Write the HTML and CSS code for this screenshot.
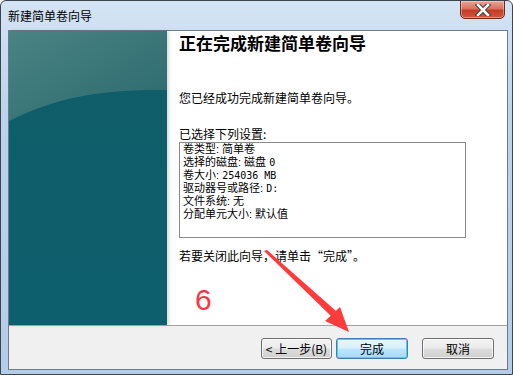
FILE: index.html
```html
<!DOCTYPE html>
<html lang="zh-CN">
<head>
  <meta charset="UTF-8">
  <title>新建简单卷向导</title>
  <link rel="stylesheet" href="styles.css">
</head>
<body>
  <div class="window">
    <div class="titlebar">
      <span class="title">新建简单卷向导</span>
      <button class="close" aria-label="关闭">
        <svg width="16" height="12" viewBox="0 0 16 12">
          <path d="M3 1 L13 11 M13 1 L3 11" stroke="#3a3f4a" stroke-width="4.5" stroke-linecap="square"/>
          <path d="M3 1 L13 11 M13 1 L3 11" stroke="#ffffff" stroke-width="2.5" stroke-linecap="square"/>
        </svg>
      </button>
    </div>

    <div class="client">
      <div class="main">
        <div class="side">
          <svg width="158" height="294" viewBox="0 0 158 294">
            <defs>
              <linearGradient id="topGrad" x1="0" y1="0" x2="1" y2="1">
                <stop offset="0" stop-color="#4a8383"/>
                <stop offset="1" stop-color="#2b696e"/>
              </linearGradient>
              <linearGradient id="lowGrad" x1="0" y1="0" x2="0" y2="1">
                <stop offset="0" stop-color="#0f5d68"/>
                <stop offset="1" stop-color="#0e5f6e"/>
              </linearGradient>
            </defs>
            <rect width="158" height="294" fill="url(#lowGrad)"/>
            <path d="M0 0 H158 V59 C110 59 60 60 0 90 Z" fill="url(#topGrad)"/>
          </svg>
        </div>

        <div class="content">
          <h1>正在完成新建简单卷向导</h1>
          <p class="intro">您已经成功完成新建简单卷向导。</p>
          <p class="label">已选择下列设置:</p>
          <div class="summary">
            <div>卷类型: 简单卷</div>
            <div>选择的磁盘: 磁盘 <span class="lat">0</span></div>
            <div>卷大小: <span class="lat">254036 MB</span></div>
            <div>驱动器号或路径: <span class="lat">D:</span></div>
            <div>文件系统: 无</div>
            <div>分配单元大小: 默认值</div>
          </div>
          <p class="closing">若要关闭此向导，请单击“完成”。</p>
        </div>
      </div>

      <div class="footer">
        <button class="btn">&lt; 上一步(B)</button>
        <button class="btn default">完成</button>
        <button class="btn cancel">取消</button>
      </div>
    </div>

    <span class="step">6</span>
    <svg class="arrow" width="513" height="375" viewBox="0 0 513 375">
      <polygon points="264,251 267,250 336,311 331,316" fill="#ff3b3b"/>
      <polygon points="349,332 325,321 340,307" fill="#ff3b3b"/>
    </svg>
  </div>
</body>
</html>
```

FILE: styles.css
```css
html, body {
  margin: 0;
  padding: 0;
  background: #ffffff;
}

.window {
  position: relative;
  width: 513px;
  height: 375px;
  box-sizing: border-box;
  padding: 0 4px 7px 7px;
  border: 1px solid #3c4450;
  border-radius: 6px 6px 0 0;
  background: linear-gradient(180deg, #d4e4f4 0%, #bcd3ea 30%, #b4cde6 100%);
  font-family: "Noto Sans CJK SC", "Liberation Sans", sans-serif;
  font-size: 12px;
  color: #000;
  overflow: hidden;
}

.titlebar {
  height: 29px;
  display: flex;
  justify-content: space-between;
  align-items: flex-start;
}

.title {
  padding-top: 8px;
  line-height: 14px;
  font-size: 12px;
  color: #000;
}

.close {
  width: 45px;
  height: 19px;
  margin: -1px 3px 0 0;
  padding: 0;
  border: 1px solid #6e2a20;
  border-radius: 0 0 5px 5px;
  background: linear-gradient(180deg, #e9a595 0%, #d9725f 45%, #c43b26 55%, #cf5a3e 100%);
  box-shadow: inset 0 0 0 1px rgba(255, 255, 255, 0.35);
  display: flex;
  align-items: center;
  justify-content: center;
}

.client {
  height: 338px;
  display: flex;
  flex-direction: column;
  border: 1px solid #6c7c8e;
  background: #f0f0f0;
}

.main {
  height: 294px;
  display: flex;
  background: #ffffff;
}

.side {
  width: 158px;
  height: 294px;
  flex-shrink: 0;
  box-shadow: 2px 0 3px rgba(0, 0, 0, 0.15);
}

.side svg {
  display: block;
}

.content {
  flex: 1;
  padding: 1px 0 0 12px;
}

.content h1 {
  margin: 0;
  font-size: 17px;
  line-height: 22px;
  font-weight: bold;
}

.content p {
  margin: 0;
  line-height: 16px;
}

.intro {
  padding-top: 36px;
}

.label {
  padding-top: 20px;
}

.summary {
  width: 282px;
  height: 94px;
  padding: 0 0 0 3px;
  border: 1px solid #8a8a8a;
  font-family: "Liberation Sans", "Noto Sans CJK SC", sans-serif;
  font-size: 11px;
  line-height: 13px;
}

.lat {
  font-family: "DejaVu Sans Mono", "Liberation Mono", monospace;
  font-size: 10px;
}

.closing {
  padding-top: 10px;
}

.footer {
  flex: 1;
  display: flex;
  justify-content: flex-end;
  align-items: flex-start;
  padding: 12px 13px 0 0;
  border-top: 1px solid #a0a0a0;
}

.btn {
  width: 71px;
  height: 21px;
  padding: 0;
  margin-left: 4px;
  font-family: "Noto Sans CJK SC", "Liberation Sans", sans-serif;
  font-size: 12px;
  line-height: 17px;
  color: #000;
  border: 1px solid #707070;
  border-radius: 3px;
  background: linear-gradient(180deg, #f2f2f2 0%, #ebebeb 48%, #dddddd 52%, #cfcfcf 100%);
  box-shadow: inset 0 0 0 1px rgba(255, 255, 255, 0.7);
}

.btn.default {
  width: 72px;
  border-color: #3c7fb1;
  background: linear-gradient(180deg, #eaf6fd 0%, #d9f0fc 48%, #bee6fd 52%, #a7d9f5 100%);
  box-shadow: inset 0 0 0 1px #48d0f8;
}

.btn.cancel {
  width: 72px;
  margin-left: 14px;
}

.step {
  position: absolute;
  left: 194px;
  top: 282px;
  font-family: "Liberation Sans", sans-serif;
  font-size: 30px;
  line-height: 34px;
  color: #ff3344;
}

.arrow {
  position: absolute;
  left: -1px;
  top: -1px;
  pointer-events: none;
}
```
